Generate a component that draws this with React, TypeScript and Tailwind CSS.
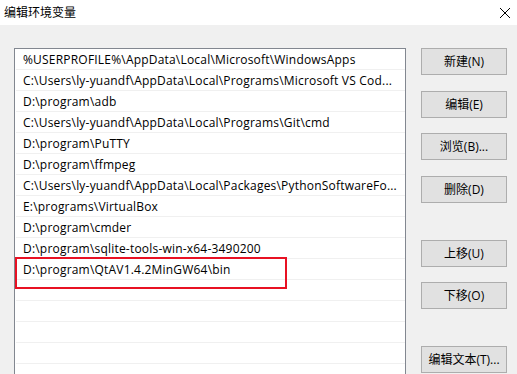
const FONT = "font-['Open_Sans','Noto_Sans_CJK_SC',sans-serif]";

const paths = [
  "%USERPROFILE%\\AppData\\Local\\Microsoft\\WindowsApps",
  "C:\\Users\\ly-yuandf\\AppData\\Local\\Programs\\Microsoft VS Cod...",
  "D:\\program\\adb",
  "C:\\Users\\ly-yuandf\\AppData\\Local\\Programs\\Git\\cmd",
  "D:\\program\\PuTTY",
  "D:\\program\\ffmpeg",
  "C:\\Users\\ly-yuandf\\AppData\\Local\\Packages\\PythonSoftwareFo...",
  "E:\\programs\\VirtualBox",
  "D:\\program\\cmder",
  "D:\\program\\sqlite-tools-win-x64-3490200",
  "D:\\program\\QtAV1.4.2MinGW64\\bin",
  "",
  "",
  "",
  "",
  "",
];

function Button({ label, className }: { label: string; className?: string }) {
  return (
    <button
      className={
        "h-[27px] w-[86px] border border-[#adadad] bg-[#e1e1e1] text-[12px] text-black leading-none " +
        (className ?? "")
      }
    >
      {label}
    </button>
  );
}

export default function App() {
  return (
    <div className={`w-[517px] h-[374px] overflow-hidden bg-white ${FONT}`}>
      {/* title bar */}
      <div className="h-[25px] bg-white flex items-center justify-between pl-[4px] pr-[5px]">
        <span className="text-[12px] text-black">编辑环境变量</span>
        <svg width="12" height="12" viewBox="0 0 12 12" className="mr-[1px]">
          <path d="M1 1 L11 11 M11 1 L1 11" stroke="#000" strokeWidth="1" />
        </svg>
      </div>

      <div className="h-[349px] bg-[#f0f0f0] flex pl-[14px] pt-[23px] overflow-hidden">
        {/* list */}
        <div className="relative w-[392px] h-[400px] shrink-0 border border-[#828790] bg-white pl-[1px] overflow-hidden">
          {paths.map((p, i) => (
            <div
              key={i}
              className="h-[21px] border-b border-[#f0f0f0] flex items-center pl-[7px] pt-[1px] text-[12px] tracking-[0.2px] text-black whitespace-nowrap"
            >
              {p}
            </div>
          ))}
          {/* highlight around the last entry */}
          <div className="absolute left-[0px] top-[208px] w-[272px] h-[32px] border-2 border-[#e81123]" />
        </div>

        {/* buttons */}
        <div className="ml-[15px] flex flex-col">
          <Button label="新建(N)" />
          <Button label="编辑(E)" className="mt-[16px]" />
          <Button label="浏览(B)..." className="mt-[15px]" />
          <Button label="删除(D)" className="mt-[16px]" />
          <Button label="上移(U)" className="mt-[37px]" />
          <Button label="下移(O)" className="mt-[15px]" />
          <Button label="编辑文本(T)..." className="mt-[37px]" />
        </div>
      </div>
    </div>
  );
}
